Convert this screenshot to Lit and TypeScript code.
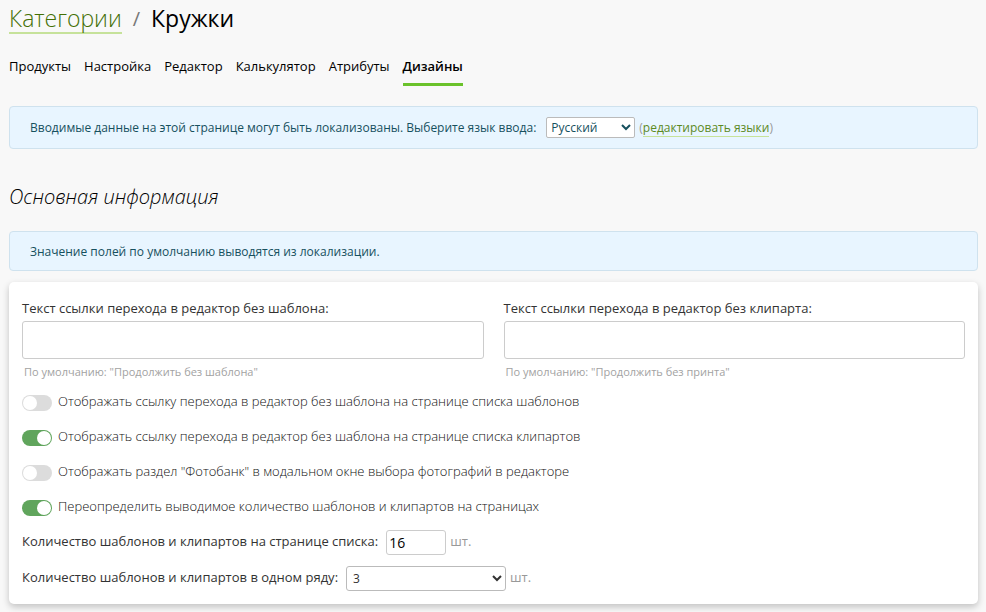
import { LitElement, html, css } from "lit";
import { customElement, state } from "lit/decorators.js";

interface Tab {
  label: string;
  active?: boolean;
}

interface Toggle {
  id: string;
  label: string;
  on: boolean;
}

const TABS: Tab[] = [
  { label: "Продукты" },
  { label: "Настройка" },
  { label: "Редактор" },
  { label: "Калькулятор" },
  { label: "Атрибуты" },
  { label: "Дизайны", active: true },
];

const FIELDS = [
  {
    id: "no-template",
    label: "Текст ссылки перехода в редактор без шаблона:",
    hint: 'По умолчанию: "Продолжить без шаблона"',
  },
  {
    id: "no-clipart",
    label: "Текст ссылки перехода в редактор без клипарта:",
    hint: 'По умолчанию: "Продолжить без принта"',
  },
];

@customElement("app-root")
export class AppRoot extends LitElement {
  static styles = css`
    :host {
      display: block;
      box-sizing: border-box;
      min-height: 100vh;
      padding: 4px 8px 8px 9px;
      background: #f8f8f8;
      color: #333;
      font: 13px/20px "Open Sans", "Noto Sans", sans-serif;
    }
    * {
      box-sizing: border-box;
    }
    a {
      text-decoration: none;
    }
    .title {
      display: flex;
      align-items: flex-start;
      gap: 11px;
      margin: 0;
      font-size: 23px;
      line-height: 28px;
      font-weight: 400;
      color: #000;
    }
    .crumb {
      color: #447005;
      font-weight: 300;
      border-bottom: 2px solid #c6e29a;
    }
    .slash {
      color: #777;
      font-size: 20px;
      line-height: 30px;
    }
    .tabs {
      display: flex;
      flex-wrap: wrap;
      gap: 13px;
      margin-top: 22px;
    }
    .tab {
      padding-bottom: 7px;
      border-bottom: 3px solid transparent;
      color: #000;
    }
    .tab.active {
      font-weight: 600;
      border-color: #6ac22b;
    }
    .alert {
      display: flex;
      flex-wrap: wrap;
      align-items: flex-end;
      gap: 4px;
      padding: 10px 20px 8px;
      border: 1px solid #cfe2ee;
      border-radius: 4px;
      background: #e8f5ff;
      color: #16505e;
      font-size: 12px;
      line-height: 20px;
    }
    .locale {
      margin-top: 20px;
      padding: 10px 20px;
    }
    .locale label {
      margin-right: 2px;
    }
    select,
    .number,
    .text {
      border: 1px solid #bbb;
      border-radius: 3px;
      background-color: #fff;
      font-family: inherit;
    }
    .language {
      width: 89px;
      height: 21px;
      padding: 0;
      border-radius: 2px;
      color: #16505e;
      font-size: 12px;
    }
    .locale .language {
      margin-left: 4px;
    }
    .paren {
      color: #999;
    }
    .link {
      color: #5c8a1e;
      border-bottom: 1px solid #c6e29a;
    }
    .section {
      margin: 33px 0 19px;
      font-size: 20px;
      line-height: 30px;
      font-weight: 300;
      font-style: italic;
      color: #000;
    }
    .card {
      margin-top: 11px;
      padding: 16px 13px 13px;
      border-radius: 5px;
      background: #fff;
      box-shadow: 0 3px 7px rgba(0, 0, 0, 0.22);
    }
    .fields {
      display: grid;
      grid-template-columns: 1fr 1fr;
      gap: 20px;
    }
    .field {
      display: flex;
      flex-direction: column;
    }
    .text {
      width: 100%;
      height: 38px;
      margin-top: 3px;
      padding: 0 8px;
      border-color: #ccc;
      font-size: 13px;
    }
    .hint {
      padding: 3px 2px 0;
      color: #a2a2a2;
      font-size: 11px;
    }
    .toggles {
      display: grid;
      gap: 15px;
      margin-top: 9px;
      color: #111;
      font-weight: 300;
    }
    .toggle {
      display: flex;
      align-items: flex-start;
      gap: 6px;
    }
    .switch {
      appearance: none;
      flex: none;
      width: 30px;
      height: 16px;
      margin: 4px 0 0;
      padding: 1px;
      border-radius: 8px;
      background: #dcdcdc;
    }
    .switch::before {
      content: "";
      display: block;
      width: 14px;
      height: 14px;
      border-radius: 50%;
      background: #fff;
    }
    .switch:checked {
      background: #60a55c;
    }
    .switch:checked::before {
      margin-left: 14px;
    }
    .row {
      display: flex;
      align-items: flex-start;
      gap: 4px;
      margin-top: 11px;
    }
    .row label,
    .unit {
      padding-top: 1px;
    }
    .row label {
      margin-right: 4px;
    }
    .number {
      width: 60px;
      height: 25px;
      padding: 2px;
      border-color: #ccc;
      font-size: 14px;
      color: #000;
    }
    .count {
      width: 160px;
      height: 25px;
      padding: 0 0 0 2px;
      font-size: 12px;
      color: #333;
    }
    .unit {
      color: #999;
    }
    .toggles + .row {
      margin-top: 14px;
    }
  `;

  @state() private toggles: Toggle[] = [
    {
      id: "templates",
      label: "Отображать ссылку перехода в редактор без шаблона на странице списка шаблонов",
      on: false,
    },
    {
      id: "cliparts",
      label: "Отображать ссылку перехода в редактор без шаблона на странице списка клипартов",
      on: true,
    },
    {
      id: "photobank",
      label: 'Отображать раздел "Фотобанк" в модальном окне выбора фотографий в редакторе',
      on: false,
    },
    {
      id: "override",
      label: "Переопределить выводимое количество шаблонов и клипартов на страницах",
      on: true,
    },
  ];

  private flip(id: string) {
    this.toggles = this.toggles.map((t) => (t.id === id ? { ...t, on: !t.on } : t));
  }

  render() {
    return html`
      <h1 class="title">
        <a class="crumb" href="#">Категории</a>
        <span class="slash">/</span>
        <span>Кружки</span>
      </h1>
      <nav class="tabs">
        ${TABS.map(
          (t) => html`<a class="tab ${t.active ? "active" : ""}" href="#">${t.label}</a>`
        )}
      </nav>
      <div class="alert locale">
        <label for="language"
          >Вводимые данные на этой странице могут быть локализованы. Выберите язык ввода:</label
        >
        <select id="language" class="language">
          <option>Русский</option>
        </select>
        <span class="paren">(<a class="link" href="#">редактировать языки</a>)</span>
      </div>
      <h2 class="section">Основная информация</h2>
      <div class="alert">Значение полей по умолчанию выводятся из локализации.</div>
      <form class="card">
        <div class="fields">
          ${FIELDS.map(
            (f) => html`<div class="field">
              <label for=${f.id}>${f.label}</label>
              <input class="text" id=${f.id} type="text" />
              <span class="hint">${f.hint}</span>
            </div>`
          )}
        </div>
        <div class="toggles">
          ${this.toggles.map(
            (t) => html`<div class="toggle">
              <input
                class="switch"
                type="checkbox"
                id=${t.id}
                .checked=${t.on}
                @change=${() => this.flip(t.id)}
              />
              <label for=${t.id}>${t.label}</label>
            </div>`
          )}
        </div>
        <div class="row">
          <label for="per-page">Количество шаблонов и клипартов на странице списка:</label>
          <input class="number" id="per-page" type="text" inputmode="numeric" value="16" />
          <span class="unit">шт.</span>
        </div>
        <div class="row">
          <label for="per-row">Количество шаблонов и клипартов в одном ряду:</label>
          <select class="count" id="per-row">
            <option>3</option>
          </select>
          <span class="unit">шт.</span>
        </div>
      </form>
    `;
  }
}
